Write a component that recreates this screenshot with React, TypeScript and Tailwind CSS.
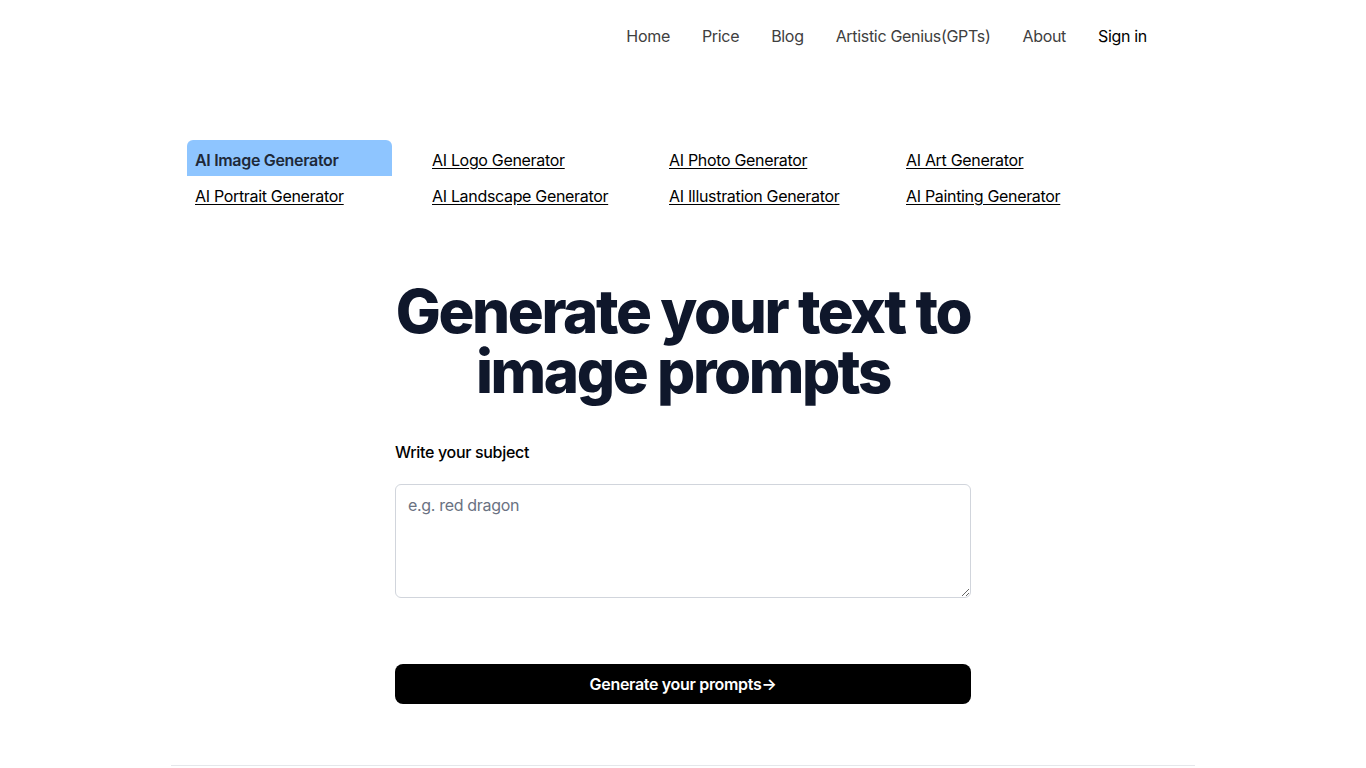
import { useState } from 'react'

const navItems = ['Home', 'Price', 'Blog', 'Artistic Genius(GPTs)', 'About']

const tools = [
  'AI Image Generator',
  'AI Logo Generator',
  'AI Photo Generator',
  'AI Art Generator',
  'AI Portrait Generator',
  'AI Landscape Generator',
  'AI Illustration Generator',
  'AI Painting Generator'
]

export default function App() {
  const [active, setActive] = useState(0)
  const [subject, setSubject] = useState('')

  return (
    <div className="min-h-screen bg-white font-['Inter',sans-serif] tracking-[-0.02em] text-black">
      <div className="mx-auto max-w-5xl border-b border-gray-200">
        {/* header */}
        <header className="flex h-[72px] items-center justify-end pr-12">
          <nav className="flex items-center gap-8 text-base">
            {navItems.map((item) => (
              <a key={item} href="#" className="text-neutral-700 hover:text-black">
                {item}
              </a>
            ))}
            <a href="#" className="text-black">Sign in</a>
          </nav>
        </header>

        {/* tool tabs */}
        <div className="mt-[68px] grid grid-cols-[repeat(4,205px)] gap-x-8 px-4">
          {tools.map((tool, i) => (
            <button
              key={tool}
              onClick={() => setActive(i)}
              className={`h-9 px-2 pt-1 text-left text-base ${
                active === i
                  ? 'rounded-t-md bg-blue-300 font-semibold text-gray-800'
                  : 'underline underline-offset-2'
              }`}
            >
              {tool}
            </button>
          ))}
        </div>

        {/* main form */}
        <main className="mx-auto mt-[69px] max-w-xl pb-[61px]">
          <h1 className="text-center text-6xl font-extrabold leading-[60px] tracking-[-0.04em] text-slate-900">
            Generate your text to image prompts
          </h1>

          <label htmlFor="subject" className="mt-[39px] block text-base font-medium">
            Write your subject
          </label>
          <textarea
            id="subject"
            value={subject}
            onChange={(e) => setSubject(e.target.value)}
            placeholder="e.g. red dragon"
            className="mt-5 block h-[114px] w-full rounded-md border border-gray-300 px-3 py-2 text-base placeholder:text-gray-500 focus:outline-none"
          />

          <button className="mt-[66px] flex h-10 w-full items-center justify-center rounded-lg bg-black text-base font-semibold text-white">
            Generate your prompts→
          </button>
        </main>
      </div>
    </div>
  )
}
